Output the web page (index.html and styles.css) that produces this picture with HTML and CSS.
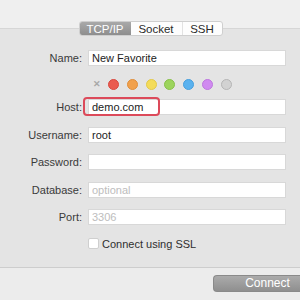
FILE: index.html
```html
<!DOCTYPE html>
<html>
<head>
<meta charset="utf-8">
<link rel="stylesheet" href="styles.css">
</head>
<body>
<div class="window">
  <div class="header">
    <div class="segmented">
      <span class="seg seg-tcp selected">TCP/IP</span>
      <span class="seg seg-socket">Socket</span>
      <span class="seg seg-ssh">SSH</span>
    </div>
  </div>
  <div class="panel">
    <div class="row">
      <label class="label">Name:</label>
      <div class="input">New Favorite</div>
    </div>
    <div class="colors">
      <span class="clear">&#x2715;</span>
      <span class="dot red"></span>
      <span class="dot orange"></span>
      <span class="dot yellow"></span>
      <span class="dot green"></span>
      <span class="dot blue"></span>
      <span class="dot purple"></span>
      <span class="dot gray"></span>
    </div>
    <div class="row host-row">
      <label class="label">Host:</label>
      <div class="input">demo.com</div>
      <div class="highlight"></div>
    </div>
    <div class="row next">
      <label class="label">Username:</label>
      <div class="input">root</div>
    </div>
    <div class="row next">
      <label class="label">Password:</label>
      <div class="input"></div>
    </div>
    <div class="row next">
      <label class="label">Database:</label>
      <div class="input placeholder">optional</div>
    </div>
    <div class="row next">
      <label class="label">Port:</label>
      <div class="input placeholder">3306</div>
    </div>
    <div class="check-row">
      <span class="checkbox"></span>
      <span class="check-label">Connect using SSL</span>
    </div>
  </div>
  <div class="footer">
    <div class="button">Connect</div>
  </div>
</div>
</body>
</html>
```
FILE: styles.css
```css
html, body {
  margin: 0;
  padding: 0;
}
body {
  width: 300px;
  height: 300px;
  overflow: hidden;
  background: #ececec;
  font-family: "Liberation Sans", Arial, sans-serif;
  font-size: 11px;
  color: #333;
}
.window {
  width: 300px;
  height: 300px;
  display: flex;
  flex-direction: column;
}
.header {
  height: 28px;
  flex: none;
  background: #efefef;
  display: flex;
  justify-content: center;
  align-items: flex-start;
  padding-top: 21px;
  box-sizing: border-box;
  position: relative;
  z-index: 2;
}
.segmented {
  display: flex;
  height: 15px;
  border: 1px solid #cfcfcf;
  border-radius: 3px;
  background: #fdfdfd;
  box-sizing: border-box;
  overflow: hidden;
  margin-left: 1px;
}
.seg {
  display: flex;
  align-items: center;
  justify-content: center;
  height: 13px;
  color: #2b2b2b;
  font-size: 11.5px;
}
.seg-tcp { width: 51px; }
.seg-socket { width: 51px; border-right: 1px solid #e2e2e2; }
.seg-ssh { width: 39px; }
.seg.selected {
  background: linear-gradient(#a9a9a9, #8e8e8e);
  color: #fff;
}
.panel {
  flex: none;
  height: 240px;
  background: #e4e4e4;
  border-top: 1px solid #d6d6d6;
  border-bottom: 1px solid #cdcdcd;
  box-sizing: border-box;
  padding-top: 21px;
  display: flex;
  flex-direction: column;
}
.row {
  display: flex;
  align-items: center;
  height: 16px;
  flex: none;
  position: relative;
}
.row.next {
  margin-top: 11.5px;
}
.label {
  width: 82px;
  text-align: right;
  padding-right: 6px;
  color: #3a3a3a;
  flex: none;
}
.input {
  width: 198px;
  height: 16px;
  background: #fff;
  border: 1px solid #d8d8d8;
  box-sizing: border-box;
  padding-left: 3px;
  line-height: 14px;
  color: #222;
  flex: none;
}
.input.placeholder {
  color: #bdbdbd;
}
.colors {
  display: flex;
  align-items: center;
  height: 11px;
  flex: none;
  margin: 12.5px 0 9.5px 92px;
}
.clear {
  width: 10px;
  text-align: center;
  color: #a8a8a8;
  font-size: 9px;
  font-weight: bold;
  line-height: 11px;
  margin-right: 6px;
}
.dot {
  width: 11px;
  height: 11px;
  border-radius: 50%;
  box-sizing: border-box;
  flex: none;
  margin-right: 7.8px;
}
.red { background: #ea5b50; border: 1px solid #d9483f; }
.orange { background: #f1a14d; border: 1px solid #e08e3a; }
.yellow { background: #f4dc5a; border: 1px solid #e3c94a; }
.green { background: #9dd45d; border: 1px solid #88c04a; }
.blue { background: #5ab2ef; border: 1px solid #479fdd; }
.purple { background: #d08af0; border: 1px solid #bd76de; }
.gray { background: #d2d2d2; border: 1px solid #b5b5b5; }
.highlight {
  position: absolute;
  left: 83px;
  top: -2px;
  width: 77px;
  height: 19px;
  border: 2px solid #dc4a5a;
  border-radius: 4px;
  box-sizing: border-box;
}
.check-row {
  display: flex;
  align-items: center;
  flex: none;
  margin-top: 13px;
  padding-left: 88px;
  height: 11px;
}
.checkbox {
  width: 11px;
  height: 11px;
  background: #fff;
  border: 1px solid #cfcfcf;
  border-radius: 2px;
  box-sizing: border-box;
  flex: none;
}
.check-label {
  margin-left: 3px;
  color: #2f2f2f;
  font-size: 11px;
}
.footer {
  flex: 1;
  background: #ececec;
  display: flex;
  padding: 7px 0 0 213px;
  box-sizing: border-box;
}
.button {
  width: 87px;
  height: 17px;
  flex: none;
  border-radius: 4px 0 0 4px;
  background: linear-gradient(#ababab, #8f8f8f);
  border: 1px solid #8a8a8a;
  border-right: none;
  box-sizing: border-box;
  color: #fff;
  text-align: center;
  line-height: 15px;
  font-size: 12px;
  padding-left: 21px;
}
```
